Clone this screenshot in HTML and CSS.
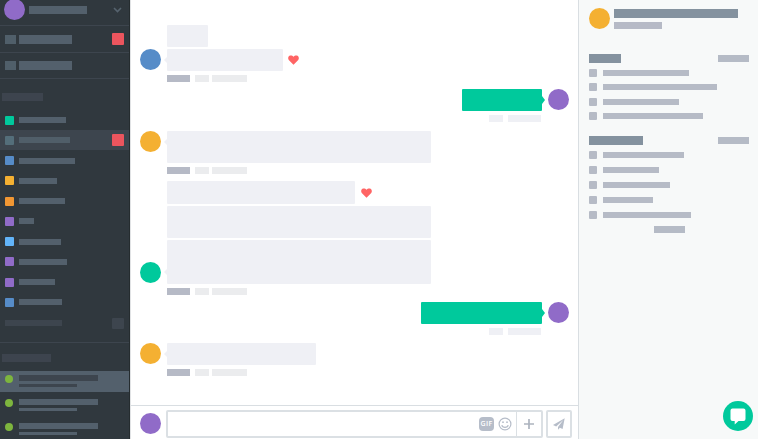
FILE: index.html
```
<!DOCTYPE html>
<html lang="en">
<head>
<meta charset="utf-8">
<title>Chat</title>
<link rel="stylesheet" href="styles.css">
</head>
<body>
<div class="app">
  <aside class="sidebar">
    <header class="account">
      <span class="avatar purple"></span>
      <span class="bar account-name"></span>
      <svg class="chevron" viewBox="0 0 9 6"><path d="M1 1l3.5 3.5L8 1"/></svg>
    </header>
    <div class="nav-row"><i class="nav-icon"></i><i class="bar nav-text"></i><i class="badge"></i></div>
    <div class="nav-row short"><i class="nav-icon"></i><i class="bar nav-text"></i></div>
    <div class="group-label"></div>
    <ul class="channels">
      <li><i class="dot green"></i><i class="bar" style="width:47px"></i></li>
      <li class="active"><i class="dot teal"></i><i class="bar" style="width:51px"></i><i class="badge"></i></li>
      <li><i class="dot blue"></i><i class="bar" style="width:56px"></i></li>
      <li><i class="dot yellow"></i><i class="bar" style="width:38px"></i></li>
      <li><i class="dot orange"></i><i class="bar" style="width:46px"></i></li>
      <li><i class="dot purple"></i><i class="bar" style="width:15px"></i></li>
      <li><i class="dot sky"></i><i class="bar" style="width:42px"></i></li>
      <li><i class="dot purple"></i><i class="bar" style="width:48px"></i></li>
      <li><i class="dot purple"></i><i class="bar" style="width:36px"></i></li>
      <li><i class="dot blue"></i><i class="bar" style="width:43px"></i></li>
      <li class="more"><i class="bar" style="width:57px"></i><i class="badge muted"></i></li>
    </ul>
    <section class="people">
      <div class="group-label wide"></div>
      <div class="person selected"><i class="online"></i><div><i class="line"></i><i class="subline"></i></div></div>
      <div class="person"><i class="online"></i><div><i class="line"></i><i class="subline"></i></div></div>
      <div class="person"><i class="online"></i><div><i class="line"></i><i class="subline"></i></div></div>
    </section>
  </aside>

  <main class="chat">
    <div class="messages">
      <article class="msg first">
        <span class="avatar blue"></span>
        <div class="body">
          <div class="bubble" style="width:41px;height:22px"></div>
          <div class="row"><div class="bubble tail" style="width:116px;height:22px"></div><svg class="heart" viewBox="0 0 11 10"><path d="M5.500 9.700L1 5.300C-.3 3.900 0 1.700 1.400.8c1.300-.8 3.100-.4 4.100 1C6.500.4 8.300 0 9.600.8 11 1.700 11.300 3.900 10 5.300z"/></svg></div>
          <div class="meta"><i></i><i></i><i></i></div>
        </div>
      </article>
      <article class="msg own">
        <div class="body">
          <div class="bubble tail" style="width:80px;height:22px"></div>
          <div class="meta"><i></i><i></i></div>
        </div>
        <span class="avatar purple"></span>
      </article>
      <article class="msg second">
        <span class="avatar yellow"></span>
        <div class="body">
          <div class="bubble tail" style="width:264px;height:32px"></div>
          <div class="meta"><i></i><i></i><i></i></div>
        </div>
      </article>
      <article class="msg third">
        <span class="avatar green"></span>
        <div class="body">
          <div class="row"><div class="bubble" style="width:188px;height:23px"></div><svg class="heart" viewBox="0 0 11 10"><path d="M5.500 9.700L1 5.300C-.3 3.900 0 1.700 1.400.8c1.300-.8 3.100-.4 4.100 1C6.500.4 8.300 0 9.600.8 11 1.700 11.300 3.900 10 5.300z"/></svg></div>
          <div class="bubble" style="width:264px;height:32px"></div>
          <div class="bubble tail" style="width:264px;height:44px"></div>
          <div class="meta"><i></i><i></i><i></i></div>
        </div>
      </article>
      <article class="msg own later">
        <div class="body">
          <div class="bubble tail" style="width:121px;height:22px"></div>
          <div class="meta"><i></i><i></i></div>
        </div>
        <span class="avatar purple"></span>
      </article>
      <article class="msg fourth">
        <span class="avatar yellow"></span>
        <div class="body">
          <div class="bubble tail" style="width:149px;height:22px"></div>
          <div class="meta"><i></i><i></i><i></i></div>
        </div>
      </article>
    </div>
    <footer class="composer">
      <span class="avatar purple"></span>
      <div class="input">
        <span class="gif">GIF</span>
        <svg class="smile" viewBox="0 0 14 14"><circle cx="7" cy="7" r="5.900"/><path d="M3.800 8.200c.7 2.900 5.700 2.900 6.400 0"/><circle class="eye" cx="5" cy="5.200" r=".9"/><circle class="eye" cx="9" cy="5.200" r=".9"/></svg>
        <span class="add"><svg viewBox="0 0 10 10"><path d="M5 0v10M0 5h10"/></svg></span>
      </div>
      <div class="send"><svg viewBox="0 0 12 12"><path d="M11.700.3L0 7l3.200 1.400L10.300 2 5 9v2.800l1.900-2 2.700 1.200z"/></svg></div>
    </footer>
  </main>

  <aside class="details">
    <header class="profile">
      <span class="avatar yellow"></span>
      <div><i class="title"></i><i class="subtitle"></i></div>
    </header>
    <section class="files">
      <div class="heading"><i style="width:32px"></i><i class="link"></i></div>
      <ul>
        <li><i></i><i style="width:86px"></i></li>
        <li><i></i><i style="width:114px"></i></li>
        <li><i></i><i style="width:76px"></i></li>
        <li><i></i><i style="width:100px"></i></li>
      </ul>
    </section>
    <section class="tasks">
      <div class="heading"><i style="width:54px"></i><i class="link"></i></div>
      <ul>
        <li><i></i><i style="width:81px"></i></li>
        <li><i></i><i style="width:56px"></i></li>
        <li><i></i><i style="width:67px"></i></li>
        <li><i></i><i style="width:50px"></i></li>
        <li><i></i><i style="width:88px"></i></li>
      </ul>
      <i class="link show-more"></i>
    </section>
    <svg class="launcher" viewBox="0 0 30 30"><circle cx="15" cy="15" r="15"/><path d="M9.500 7.500h11a2 2 0 0 1 2 2V18a2 2 0 0 1-2 2h-5l-3.800 3.500V20H9.500a2 2 0 0 1-2-2V9.500a2 2 0 0 1 2-2z"/></svg>
  </aside>
</div>
</body>
</html>
```
FILE: styles.css
```
* { box-sizing: border-box; }
html, body { margin: 0; height: 100%; overflow: hidden; }
body { font-family: "Open Sans", "Liberation Sans", sans-serif; }
i { display: block; flex: none; }
svg { display: block; flex: none; }
ul { list-style: none; margin: 0; padding: 0; }

.app { display: grid; grid-template-columns: 130px 448px 180px; height: 439px; background: #fff; }
.avatar { flex: none; width: 21px; height: 21px; border-radius: 50%; }
.purple { background: #906bc8; }
.green { background: #00c99c; }
.teal { background: #546e7a; }
.blue { background: #568cc8; }
.yellow { background: #f4b032; }
.orange { background: #f19733; }
.sky { background: #62b4f9; }

/* Sidebar */
.sidebar { overflow: hidden; background: #30383e; border-right: 1px solid #252c2f; }
.bar { background: #53606c; }
.account { display: flex; align-items: center; height: 26px; padding: 0 7px 6px 4px; border-bottom: 1px solid #3d454e; }
.account-name { width: 58px; height: 8px; margin-left: 4px; }
.chevron { width: 9px; height: 6px; margin-left: auto; }
.chevron path { fill: none; stroke: #56636e; stroke-width: 1.6; }
.nav-row { display: flex; align-items: center; height: 27px; padding: 0 5px; border-bottom: 1px solid #3d454e; }
.nav-row.short { height: 26px; }
.nav-icon { width: 11px; height: 9px; background: #505f6a; }
.nav-text { width: 53px; height: 9px; margin-left: 3px; }
.badge { width: 12px; height: 12px; margin-left: auto; border-radius: 1px; background: #ec555e; }
.badge.muted { height: 11px; background: #3d454e; }
.group-label { width: 41px; height: 8px; margin: 14px 0 0 2px; background: #3d444e; }
.channels { padding-top: 8.9px; }
.channels li { display: flex; align-items: center; gap: 5px; height: 20.25px; padding: 0 5px; }
.channels .active { background: #3d454e; }
.dot { width: 9px; height: 9px; border-radius: 1px; }
.channels .bar { height: 6px; }
.channels .active .bar { background: #505e69; }
.channels .more { height: 22px; }
.channels .more .bar { background: #3d454e; }
.people { margin-top: 8px; border-top: 1px solid #3d454e; }
.group-label.wide { width: 49px; margin: 11px 0 9px 2px; }
.person { display: flex; gap: 6px; height: 21px; margin-bottom: 3px; padding: 4px 5px 0; }
.online { width: 8px; height: 8px; border-radius: 50%; background: #7db53e; }
.line { width: 79px; height: 6px; background: #53606c; }
.subline { width: 58px; height: 3px; margin-top: 3px; background: #53606c; }
.selected { background: #53606c; }
.selected .line, .selected .subline { background: #3d454e; }

/* Conversation */
.chat { display: flex; flex-direction: column; min-width: 0; border-left: 1px solid #e1e3e5; }
.messages { flex: 1; padding: 25px 9px 0; }
.msg { display: flex; align-items: flex-start; gap: 6px; }
.body { display: flex; flex-direction: column; align-items: flex-start; gap: 2px; }
.row { display: flex; align-items: center; gap: 5px; }
.bubble { position: relative; border-radius: 1px; background: #eff0f5; }
.tail::before { content: ""; position: absolute; left: -3px; top: 8px; border: 3px solid transparent; border-left: 0; border-right-color: #eff0f5; }
.heart { width: 11px; height: 10px; fill: #ff6464; }
.meta { display: flex; margin-top: 2px; }
.meta i { height: 7px; background: #ebecee; }
.meta i:nth-child(1) { width: 23px; background: #b6bac6; }
.meta i:nth-child(2) { width: 14px; margin: 0 3px 0 5px; }
.meta i:nth-child(3) { width: 35px; }
.first .avatar { margin-top: 24px; }
.second { margin-top: 9px; }
.third { margin-top: 7px; }
.third .row { gap: 6px; }
.third .avatar { margin-top: 80.5px; }
.third .tail::before { top: 29px; }
.fourth { margin-top: 8px; }
.own { justify-content: flex-end; margin-top: 7px; }
.own .body { align-items: flex-end; }
.own .bubble { background: #00c99c; }
.own .tail::before { left: auto; right: -3px; top: 7px; border: 4px solid transparent; border-left: 3px solid #00c99c; border-right: 0; }
.own .meta i:nth-child(1) { width: 14px; background: #eff0f5; }
.own .meta i:nth-child(2) { width: 33px; margin: 0 1px 0 5px; background: #eff0f5; }

.composer { display: flex; align-items: center; height: 34px; padding: 2px 6px 0 9px; border-top: 1px solid #d9dee2; }
.input { display: flex; align-items: center; width: 377px; height: 28px; margin-left: 5px; border: 2px solid #dbe0e4; border-radius: 2px; }
.gif { display: grid; place-items: center; width: 15px; height: 14px; margin-left: auto; border-radius: 4px; background: #b6bdc9; color: #fff; font-size: 7px; font-weight: 600; line-height: 1; letter-spacing: .3px; }
.smile { width: 14px; height: 14px; margin: 0 4px; fill: none; stroke: #b6bdc9; stroke-width: 1.2; }
.eye { fill: #b6bdc9; stroke: none; }
.add { display: grid; place-items: center; width: 25px; height: 24px; border-left: 1px solid #dbe0e4; }
.add svg { width: 10px; height: 10px; stroke: #adb4bf; stroke-width: 1.7; }
.send { display: grid; place-items: center; width: 26px; height: 28px; margin-left: 3px; border: 2px solid #dbe0e4; border-radius: 2px; }
.send svg { width: 12px; height: 12px; fill: #b6bdc9; }

/* Details */
.details { position: relative; padding: 8px 9px 0; border-left: 1px solid #d9dee2; background: #f7f9f9; }
.profile { display: flex; gap: 4px; padding-left: 1px; }
.title { width: 124px; height: 9px; margin-top: 1px; background: #84929f; }
.subtitle { width: 48px; height: 7px; margin-top: 4px; background: #b6bac6; }
.files, .tasks { padding-left: 1px; }
.files { margin-top: 25px; }
.tasks { margin-top: 13px; }
.heading { display: flex; justify-content: space-between; align-items: center; height: 9px; }
.heading i { height: 9px; background: #84929f; }
.heading .link, .link { width: 31px; height: 7px; background: #b5bbc6; }
.details li { display: flex; align-items: center; gap: 6px; height: 14.3px; }
.details li i { height: 6px; background: #b6bbc6; }
.details li i:first-child { width: 8px; height: 8px; border-radius: 1px; }
.files ul { padding-top: 3px; }
.tasks ul { padding-top: 2.5px; }
.details .tasks li { height: 15.05px; }
.show-more { margin: 3px 0 0 65px; }
.launcher { position: absolute; right: 5px; bottom: 8px; width: 30px; height: 30px; }
.launcher circle { fill: #00c99c; }
.launcher path { fill: #fff; }
```
